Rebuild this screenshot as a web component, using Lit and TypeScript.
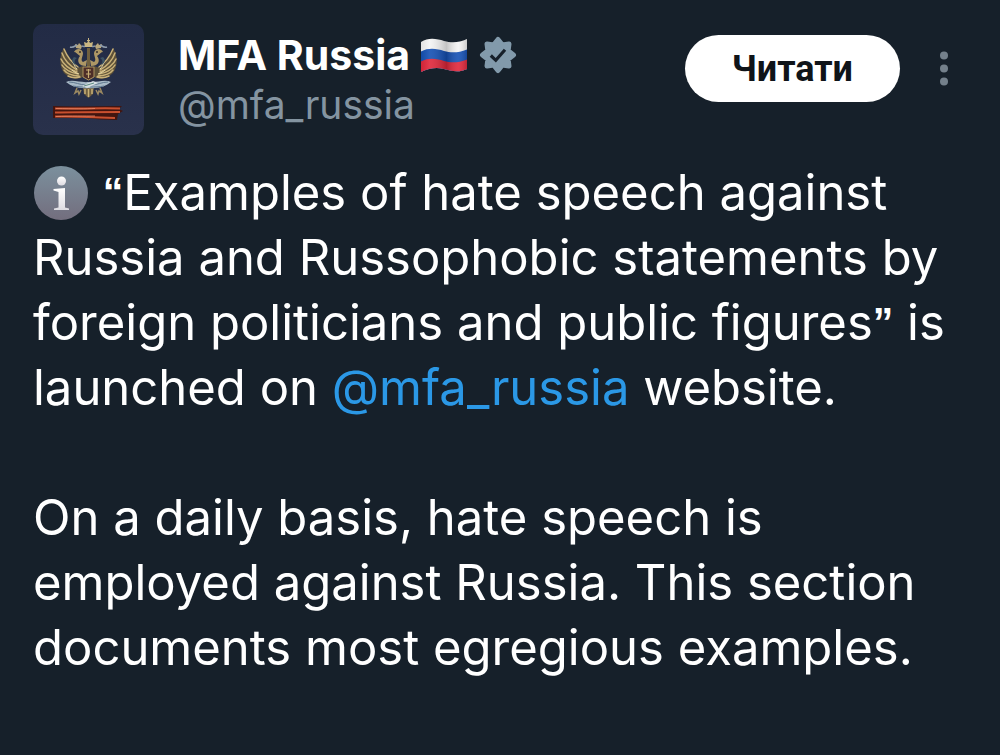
import { LitElement, html, css, svg } from "lit";
import { customElement } from "lit/decorators.js";

const half = svg`
  <path d="M31 24C26 32 26 42 31 49C37 55 44 56 50 53L50 42L44 44C38 40 34 32 31 24Z" fill="#5d5038"/>
  <path d="M45 43C39 39 34 32 31 25M44 46C37 42 31 35 29 29M44 48C37 46 30 40 28 35M45 50C38 49 31 45 29 41M46 52C39 52 33 49 31 46M47 53C43 54 39 54 35 52" fill="none" stroke="#c9b178" stroke-width="1.500" stroke-linecap="round"/>
  <path d="M44 45C42 43 41 41 40 38M46 50C43 49 41 48 39 46" fill="none" stroke="#e6d7a4" stroke-width="1"/>
  <path d="M53 42C46 42 43 37 47 32C44 30 43 28 41 28C43 24 49 24 50 29C50 33 47 36 50 38L54 36Z" fill="#ad9765"/>
  <path d="M41 33C38 35 39 40 43 41C41 38 41 36 44 34Z" fill="#3c5364"/>
  <circle cx="47" cy="28" r="1" fill="#37302f"/>
  <path d="M43 24L42 20L45 21L46 19L49 22L48 25Z" fill="#b8a77c"/>
  <path d="M37 23C40 24 42 22 44 21" stroke="#8f9dad" stroke-width="1.500" fill="none"/>
  <path d="M49 22C51 23 52 22 54 22" stroke="#8796aa" stroke-width="1.500" fill="none"/>
  <path d="M44 64L42 69L45 67L46 70L48 66" fill="none" stroke="#9c8961" stroke-width="1.500"/>
  <path d="M33 58C40 55 47 59 56 58V64C47 65 39 63 33 58Z" fill="#a9bac7"/>
  <path d="M36 58C42 58 47 61 53 61M40 62C45 63 49 63 54 63" fill="none" stroke="#60788f" stroke-width="1"/>`;

@customElement("post-avatar")
class PostAvatar extends LitElement {
  static styles = css`
    :host { display: block; flex: none; width: 111px; height: 111px; border-radius: 10px; overflow: hidden; }
    svg { display: block; width: 100%; height: 100%; }
  `;
  render() {
    return html`<svg viewBox="0 0 111 111" role="img" aria-label="MFA Russia">
      <defs>
        <linearGradient id="bg" x2="0" y2="1"><stop offset="0" stop-color="#222b45"/><stop offset="1" stop-color="#29314b"/></linearGradient>
      </defs>
      <rect width="111" height="111" fill="url(#bg)"/>
      <path d="M50 64H61L60 70L55.500 74L51 70Z" fill="#6e5e40"/>
      <path d="M52 65V70M55.500 65V73M59 65V70" stroke="#c8b176" stroke-width="1.500"/>
      <g>${half}</g>
      <g transform="translate(111 0) scale(-1 1)">${half}</g>
      <path d="M52 23L51 18L54 19L55 17H54V16H55V14H56V16H57V17H56L57 19L60 18L59 23Z" fill="#c9b682"/>
      <path d="M54 24H57V43H54Z" fill="#70603f"/>
      <path d="M50 43H61V53L55.500 56L50 53Z" fill="#4d2e28" stroke="#ad935d"/>
      <path d="M53 46H58M53 50H58M55.500 45V54" stroke="#c8ae72" stroke-width="1.200"/>
      <path d="M49 62L60 57L65 59L54 64Z" fill="#d5dde2"/>
      <path d="M51 62L61 59" stroke="#5d8a80" stroke-width="1"/>
      <path d="M20 82C42 83 66 82 89 82L86 85L90 87L85 90L84 96C72 96 62 95 54 94L20 94Z" fill="#43150f"/>
      <path d="M22 84.500C42 85 62 84 87 84.500M22 88.500C44 88 64 88 87 88M22 92.500C44 92 64 93 82 94" fill="none" stroke="#c9502f" stroke-width="2"/>
      <path d="M23 84.500C42 85 52 85 62 84.500M23 92.500C38 92 52 92 62 92" fill="none" stroke="#e8896a" stroke-width=".800"/>
    </svg>`;
  }
}

@customElement("app-root")
class AppRoot extends LitElement {
  static styles = css`
    :host { display: block; min-height: 100vh; box-sizing: border-box; padding: 24px 33px; background: #16202a; color: #fff; font-family: Inter, "Noto Sans", sans-serif; }
    header { display: flex; align-items: flex-start; }
    .who { flex: 1; min-width: 0; margin-left: 34px; padding-top: 6px; }
    .name { display: flex; align-items: center; margin: 0; font-size: 41px; line-height: 50px; font-weight: 700; white-space: nowrap; }
    .flag { width: 48px; height: 36px; margin-left: 10px; }
    .badge { width: 38px; height: 38px; margin-left: 11px; }
    .handle { display: block; width: fit-content; color: #8494a1; font-size: 39px; line-height: 50px; text-decoration: none; }
    .follow { flex: none; margin-top: 11px; padding: 2px 47px 0; height: 67px; border: 0; border-radius: 34px; background: #fff; color: #0f1419; font: 700 36px/65px Roboto, sans-serif; }
    .more { flex: none; margin: 20px 11px 0 32px; width: 24px; height: 48px; padding: 0; border: 0; background: none; }
    .more svg { display: block; width: 24px; height: 48px; }
    .text { margin-top: 25px; font-size: 49px; line-height: 65px; }
    .text p { margin: 0 0 65px; }
    .text a { color: #2b98e6; text-decoration: none; }
    .quote { font: 700 41px/41px "Liberation Sans", Arial, sans-serif; vertical-align: 4px; }
    .info { width: 55px; height: 55px; margin-right: 1px; vertical-align: -10px; }
  `;
  render() {
    return html`<article>
      <header>
        <post-avatar></post-avatar>
        <div class="who">
          <h1 class="name">MFA Russia
            <svg class="flag" viewBox="0 0 48 36" role="img" aria-label="Russia">
              <defs>
                <clipPath id="wave"><path d="M1 5C9 0 17 2 24 4S39 6 47 2V32C39 36 31 34 24 32S9 31 1 35Z"/></clipPath>
                <linearGradient id="fold"><stop offset="0" stop-opacity=".08"/><stop offset=".2" stop-color="#fff" stop-opacity=".1"/><stop offset=".55" stop-opacity=".2"/><stop offset=".8" stop-color="#fff" stop-opacity=".1"/><stop offset="1" stop-opacity=".2"/></linearGradient>
              </defs>
              <g clip-path="url(#wave)">
                <path d="M0 0H48V36H0Z" fill="#f4f4f4"/>
                <path d="M0 15C9 10 17 12 24 14S39 16 48 12V36H0Z" fill="#1450b4"/>
                <path d="M0 25C9 20 17 22 24 24S39 26 48 22V36H0Z" fill="#e0263a"/>
                <path d="M0 0H48V36H0Z" fill="url(#fold)"/>
              </g>
            </svg>
            <svg class="badge" viewBox="0 0 38 38" role="img" aria-label="Verified">
              <g fill="#829aab" stroke="#829aab" stroke-width="5" stroke-linejoin="round">
                <path d="M19 3.500L23.200 8.900L30 8L29.100 14.800L34.500 19L29.100 23.200L30 30L23.200 29.100L19 34.500L14.800 29.100L8 30L8.900 23.200L3.500 19L8.900 14.800L8 8L14.800 8.900Z"/>
              </g>
              <path fill="none" stroke="#17202a" stroke-width="3.200" d="M11.800 19.500L16.800 24.300L26 13.800"/>
            </svg>
          </h1>
          <a class="handle" href="#mfa_russia">@mfa_russia</a>
        </div>
        <button class="follow" type="button">Читати</button>
        <button class="more" type="button" aria-label="More">
          <svg viewBox="0 0 24 48" fill="#74808b"><circle cx="12" cy="11.500" r="4"/><circle cx="12" cy="24.500" r="4"/><circle cx="12" cy="37.500" r="4"/></svg>
        </button>
      </header>
      <div class="text">
        <p><svg class="info" viewBox="0 0 55 55" role="img" aria-label="Information">
            <defs>
              <linearGradient id="disc" x2="0" y2="1"><stop offset="0" stop-color="#7b909d"/><stop offset="1" stop-color="#736e7e"/></linearGradient>
              <linearGradient id="glyph" x2="0" y2="1"><stop offset="0" stop-color="#fff"/><stop offset="1" stop-color="#dedce2"/></linearGradient>
            </defs>
            <circle cx="28" cy="28" r="27" fill="url(#disc)"/>
            <circle cx="28.500" cy="16" r="4.500" fill="url(#glyph)"/>
            <path d="M20.500 24L32 23V42.500L36 43.500V45H21V43.500L25.500 42.500V27L20.500 25.500Z" fill="url(#glyph)"/>
          </svg> <span class="quote">“</span>Examples of hate speech against Russia and Russophobic statements by foreign politicians and public figures<span class="quote">”</span> is launched on <a href="#mfa_russia">@mfa_russia</a> website.</p>
        <p>On a daily basis, hate speech is employed against Russia. This section documents most egregious examples.</p>
      </div>
    </article>`;
  }
}
